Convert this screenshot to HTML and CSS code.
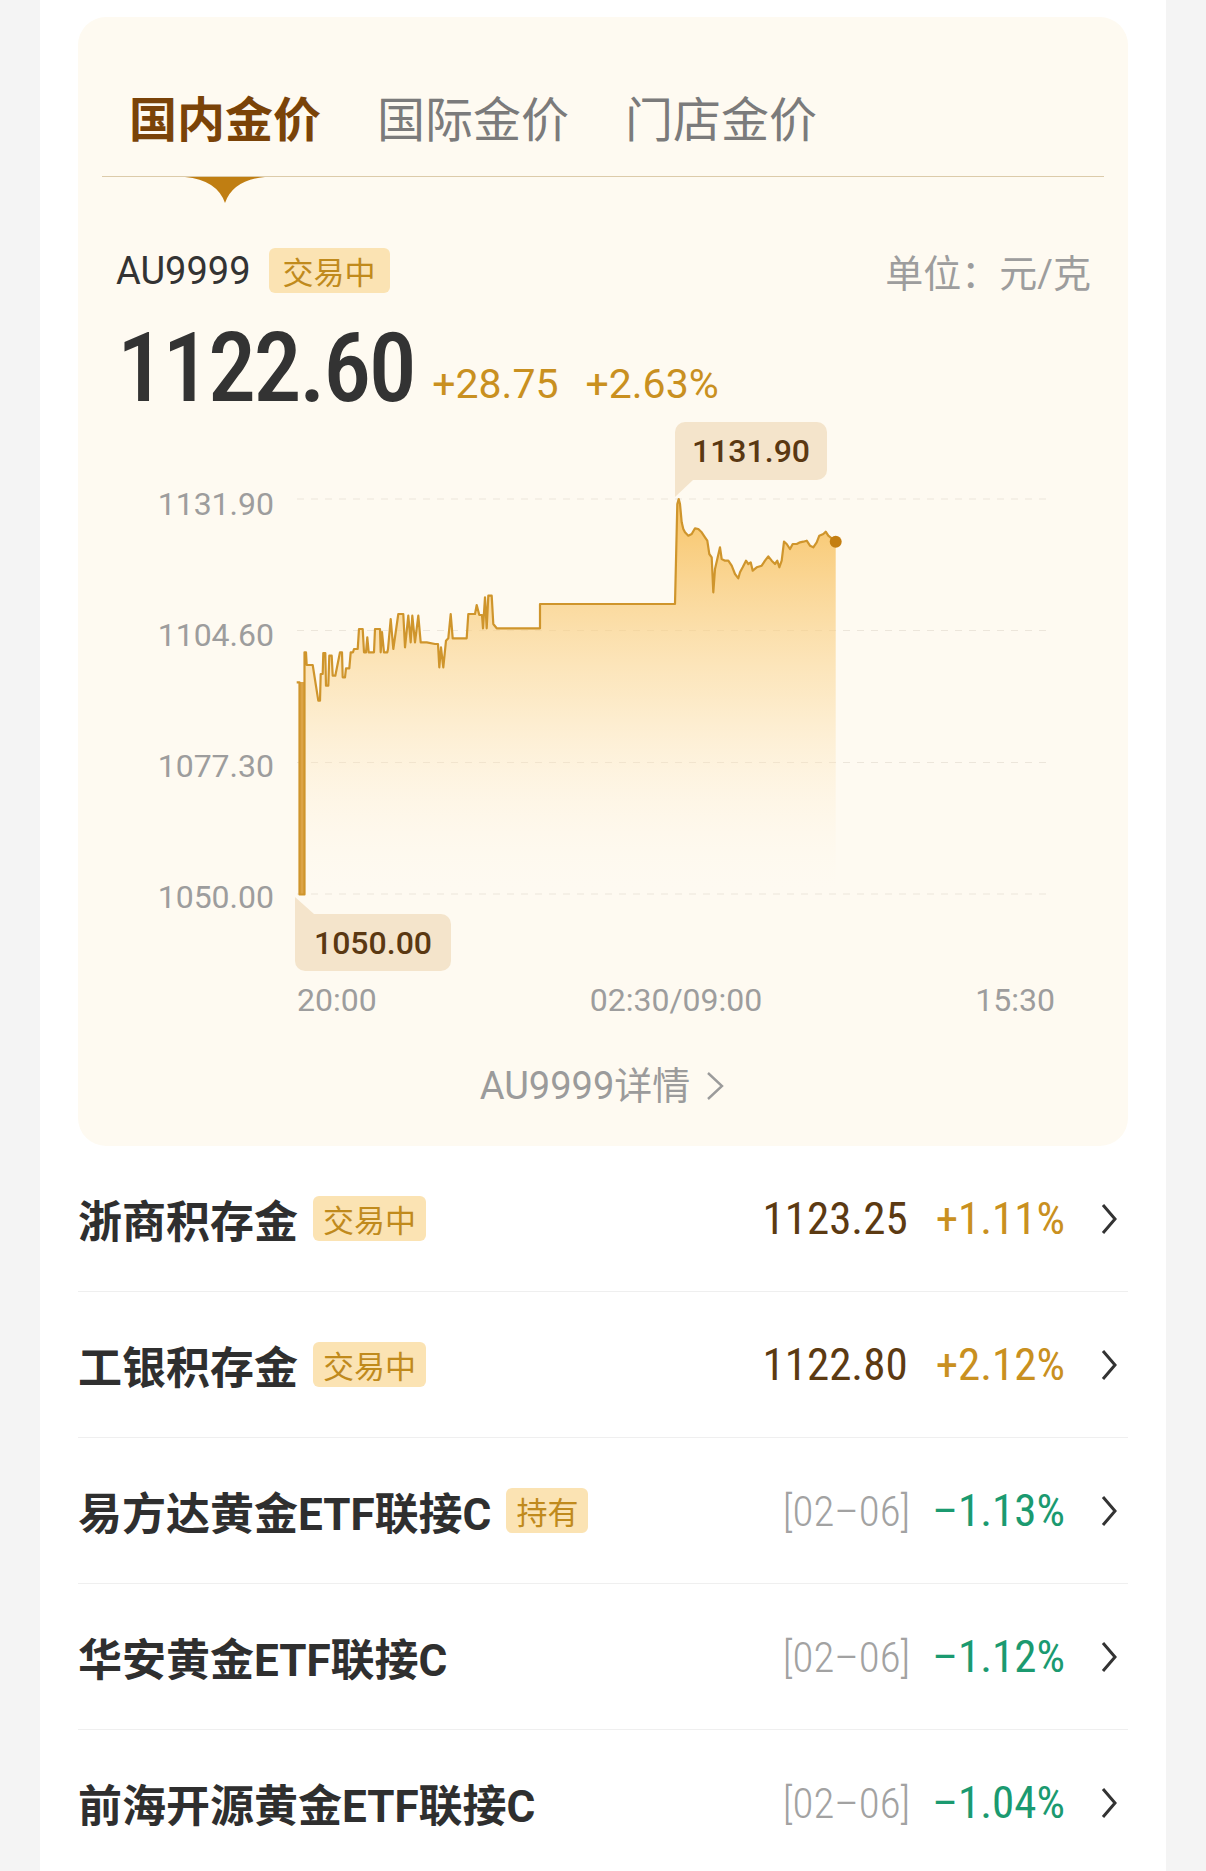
FILE: index.html
```html
<!DOCTYPE html>
<html lang="zh-CN">
<head>
  <meta charset="UTF-8">
  <title>金价</title>
  <link rel="stylesheet" href="styles.css">
</head>
<body>
  <div class="page">
    <div class="card">
      <div class="tabs">
        <span class="tab active">国内金价</span>
        <span class="tab">国际金价</span>
        <span class="tab">门店金价</span>
      </div>
      <div class="tab-line"></div>
      <svg class="tab-arrow" width="80" height="26" viewBox="0 0 80 26"><path d="M0 0H80Q48 3 40 26Q32 3 0 0Z" fill="#c07e12"/></svg>

      <div class="quote-head">
        <div class="quote-name">AU9999<span class="tag">交易中</span></div>
        <div class="unit">单位：元/克</div>
      </div>
      <div class="quote-price"><span class="price-big">1122.60</span><span class="price-chg">+28.75</span><span class="price-chg">+2.63%</span></div>

      <div class="chart">
        <div class="y-axis">
          <span>1131.90</span>
          <span>1104.60</span>
          <span>1077.30</span>
          <span>1050.00</span>
        </div>
        <div class="plot">
          <svg width="753" height="555" viewBox="0 0 753 555">
            <defs>
              <linearGradient id="fillGrad" gradientUnits="userSpaceOnUse" x1="0" y1="500" x2="0" y2="890">
                <stop offset="0" stop-color="#f7bd55" stop-opacity="0.9"/>
                <stop offset="0.5" stop-color="#fbd898" stop-opacity="0.5"/>
                <stop offset="1" stop-color="#fff5e4" stop-opacity="0"/>
              </linearGradient>
            </defs>
            <g transform="translate(-297 -420)">
              <g class="grid">
                <line x1="297" x2="1050" y1="500" y2="500"/>
                <line x1="297" x2="1050" y1="631.5" y2="631.5"/>
                <line x1="297" x2="1050" y1="763.5" y2="763.5"/>
                <line x1="297" x2="1050" y1="895" y2="895"/>
              </g>
              <path fill="url(#fillGrad)" d="M304.5 895V653.3H306L306.7 666H312.7L318.3 701.7H320L320.7 675H322.7L323.3 654H325.3L326 686.7H328.3L329.3 656.7H331.7L332.7 676.7H335.3L340 653.3H342L342.7 678.3H345L346 669.3H349.3L350.7 653.3H353L354 650H357.7L359 630H362.7L364 653.3H366L367.3 638.3L368.7 653.3H374L375 630H380L380.7 653.3L382 633L384 653.3H387.3L388 650L390.7 620L393.3 650L398.3 615H403.3L405 648.3L408.3 616.7L410.7 643.3L412.3 616.7L415 643.3L418.3 616.7L420.7 643.3H426.7L435 645H438L439.3 668.3L441 648.3L443.3 668.3L446 641.7L448.3 639.3L450.7 615L452.7 639.3H466.7L468.3 615H475L476.7 606L479.3 616H482L483 629.3L485 598.3L486.7 629.3L488.3 596.7H491.7L493.3 625L496.7 629.3H540V605H675L677.3 505L678.7 500L680 505L681.7 523.3L683.3 530L685 533.3L688.3 536.7L691.7 535L695 529.3L698.3 530L701.7 533.3L705 538.3L707.3 541.7L709.3 555L711.7 558.3L713.3 593.3L715 570L717.3 560L720 548.3L721.7 560L725 561.7L728.3 561.7L731.7 566.7L735 575L738.3 579.3L740 573.3L742.7 568.3L746 561.7L748.3 565L750.7 563.3L752.7 571.7L756.7 568.3L761.7 566.7L765 561.7L768.3 557.3L771.7 561.7L775 565L777.3 561.7L779.3 568.3L781.7 561.7L784 542.7L786.7 545L790 550L792.7 545L796.7 545L800 543.3L803.3 542.7L806.7 541.7L810 546.7L813.3 548.3L816.7 543.3L819.3 536.7L823.3 535L825.7 532.7L828.3 536.7L831.7 539.3L835.7 542.7V895Z"/>
              <rect x="299" y="683" width="6" height="212" fill="#dca446"/>
              <path class="line" d="M296.7 683.3H299.5V895.5H304.5V653.3H306L306.7 666H312.7L318.3 701.7H320L320.7 675H322.7L323.3 654H325.3L326 686.7H328.3L329.3 656.7H331.7L332.7 676.7H335.3L340 653.3H342L342.7 678.3H345L346 669.3H349.3L350.7 653.3H353L354 650H357.7L359 630H362.7L364 653.3H366L367.3 638.3L368.7 653.3H374L375 630H380L380.7 653.3L382 633L384 653.3H387.3L388 650L390.7 620L393.3 650L398.3 615H403.3L405 648.3L408.3 616.7L410.7 643.3L412.3 616.7L415 643.3L418.3 616.7L420.7 643.3H426.7L435 645H438L439.3 668.3L441 648.3L443.3 668.3L446 641.7L448.3 639.3L450.7 615L452.7 639.3H466.7L468.3 615H475L476.7 606L479.3 616H482L483 629.3L485 598.3L486.7 629.3L488.3 596.7H491.7L493.3 625L496.7 629.3H540V605H675L677.3 505L678.7 500L680 505L681.7 523.3L683.3 530L685 533.3L688.3 536.7L691.7 535L695 529.3L698.3 530L701.7 533.3L705 538.3L707.3 541.7L709.3 555L711.7 558.3L713.3 593.3L715 570L717.3 560L720 548.3L721.7 560L725 561.7L728.3 561.7L731.7 566.7L735 575L738.3 579.3L740 573.3L742.7 568.3L746 561.7L748.3 565L750.7 563.3L752.7 571.7L756.7 568.3L761.7 566.7L765 561.7L768.3 557.3L771.7 561.7L775 565L777.3 561.7L779.3 568.3L781.7 561.7L784 542.7L786.7 545L790 550L792.7 545L796.7 545L800 543.3L803.3 542.7L806.7 541.7L810 546.7L813.3 548.3L816.7 543.3L819.3 536.7L823.3 535L825.7 532.7L828.3 536.7L831.7 539.3L835.7 542.7"/>
              <circle cx="835.7" cy="542.7" r="6" fill="#c47f12"/>
            </g>
          </svg>
          <div class="tip tip-high">1131.90</div>
          <div class="tip tip-low">1050.00</div>
        </div>
      </div>
      <div class="x-axis">
        <span>20:00</span>
        <span>02:30/09:00</span>
        <span>15:30</span>
      </div>

      <a class="detail" href="#">AU9999详情<svg width="22" height="30" viewBox="0 0 22 30"><path d="M4 2L18 15L4 28" fill="none" stroke="#9b9b9b" stroke-width="2.4"/></svg></a>
    </div>

    <ul class="list">
      <li class="row">
        <div class="row-name">浙商积存金<span class="tag">交易中</span></div>
        <div class="row-data"><span class="val">1123.25</span><span class="up">+1.11%</span><svg class="go" width="18" height="32" viewBox="0 0 18 32"><path d="M3 2L15 16L3 30" fill="none" stroke="#333" stroke-width="3"/></svg></div>
      </li>
      <li class="row">
        <div class="row-name">工银积存金<span class="tag">交易中</span></div>
        <div class="row-data"><span class="val">1122.80</span><span class="up">+2.12%</span><svg class="go" width="18" height="32" viewBox="0 0 18 32"><path d="M3 2L15 16L3 30" fill="none" stroke="#333" stroke-width="3"/></svg></div>
      </li>
      <li class="row">
        <div class="row-name">易方达黄金ETF联接C<span class="tag">持有</span></div>
        <div class="row-data"><span class="date">[02–06]</span><span class="down">–1.13%</span><svg class="go" width="18" height="32" viewBox="0 0 18 32"><path d="M3 2L15 16L3 30" fill="none" stroke="#333" stroke-width="3"/></svg></div>
      </li>
      <li class="row">
        <div class="row-name">华安黄金ETF联接C</div>
        <div class="row-data"><span class="date">[02–06]</span><span class="down">–1.12%</span><svg class="go" width="18" height="32" viewBox="0 0 18 32"><path d="M3 2L15 16L3 30" fill="none" stroke="#333" stroke-width="3"/></svg></div>
      </li>
      <li class="row">
        <div class="row-name">前海开源黄金ETF联接C</div>
        <div class="row-data"><span class="date">[02–06]</span><span class="down">–1.04%</span><svg class="go" width="18" height="32" viewBox="0 0 18 32"><path d="M3 2L15 16L3 30" fill="none" stroke="#333" stroke-width="3"/></svg></div>
      </li>
    </ul>
  </div>
</body>
</html>
```

FILE: styles.css
```css
body {
  margin: 0;
  background: #f4f4f4;
  font-family: Roboto, "Noto Sans CJK SC", sans-serif;
}
.page {
  width: 1126px;
  min-height: 1871px;
  margin: 0 auto;
  padding: 17px 38px 0;
  box-sizing: border-box;
  background: #fff;
}

/* top card */
.card {
  background: #fefaf1;
  border-radius: 28px;
  padding: 75px 24px 38px;
}
.tabs {
  display: flex;
  gap: 56px;
  padding-left: 27px;
}
.tab {
  font-family: "Noto Sans CJK SC", sans-serif;
  font-size: 48px;
  line-height: 48px;
  color: #7b7b7b;
}
.tab.active {
  color: #7a4308;
  font-weight: 700;
}
.tab-line {
  height: 1px;
  margin-top: 36px;
  background: #dccbaa;
}
.tab-arrow {
  display: block;
  margin-left: 83px;
}
.quote-head {
  display: flex;
  justify-content: space-between;
  align-items: center;
  height: 45px;
  margin-top: 45px;
  padding: 0 13px 0 14px;
}
.quote-name {
  display: flex;
  align-items: center;
  gap: 18px;
  font-size: 38px;
  color: #333;
}
.tag {
  display: inline-flex;
  align-items: center;
  height: 45px;
  padding: 0 14px;
  border-radius: 6px;
  background: #fbe3b3;
  color: #c08a1c;
  font-family: "Noto Sans CJK SC", sans-serif;
  font-size: 31px;
  font-weight: 400;
}
.unit {
  font-size: 38px;
  color: #9d9d9d;
}
.quote-price {
  height: 98px;
  margin-top: 26px;
  padding-left: 15px;
  line-height: 98px;
  white-space: nowrap;
}
.price-big {
  font-family: "Roboto Condensed", Roboto, sans-serif;
  font-size: 96px;
  font-weight: 500;
  letter-spacing: -2.5px;
  color: #333;
}
.price-chg {
  margin-left: 18px;
  font-size: 41px;
  line-height: 1;
  vertical-align: 3px;
  color: #c99020;
}
.price-chg + .price-chg {
  margin-left: 27px;
}

/* chart */
.chart {
  display: flex;
  height: 555px;
  margin-top: 2px;
}
.y-axis {
  flex: none;
  width: 172px;
  display: flex;
  flex-direction: column;
  align-items: flex-end;
  gap: 91px;
  padding-top: 65px;
  box-sizing: border-box;
  font-size: 32px;
  line-height: 40px;
  color: #9d9d9d;
}
.plot {
  position: relative;
  width: 753px;
  margin-left: 23px;
}
.plot svg {
  display: block;
  overflow: visible;
}
.grid line {
  stroke: #ece6db;
  stroke-width: 1;
  stroke-dasharray: 7 7;
}
.line {
  fill: none;
  stroke: #cf952c;
  stroke-width: 2.2;
  stroke-linejoin: round;
}
.tip {
  position: absolute;
  display: flex;
  justify-content: center;
  align-items: center;
  background: #f4e4cb;
  border-radius: 10px;
  font-size: 32px;
  font-weight: 500;
  color: #5a3812;
}
.tip-high {
  left: 378px;
  top: 3px;
  width: 152px;
  height: 58px;
  border-bottom-left-radius: 0;
}
.tip-high::after {
  content: "";
  position: absolute;
  left: 0;
  top: 100%;
  border-top: 17px solid #f4e4cb;
  border-right: 18px solid transparent;
}
.tip-low {
  left: -2px;
  top: 495px;
  width: 156px;
  height: 57px;
  border-top-left-radius: 0;
}
.tip-low::before {
  content: "";
  position: absolute;
  left: 0;
  bottom: 100%;
  border-bottom: 17px solid #f4e4cb;
  border-right: 19px solid transparent;
}
.x-axis {
  display: flex;
  justify-content: space-between;
  width: 758px;
  margin: 10px 0 0 195px;
  font-size: 32px;
  line-height: 32px;
  color: #9d9d9d;
}
.detail {
  display: flex;
  justify-content: center;
  align-items: center;
  gap: 14px;
  margin-top: 51px;
  margin-bottom: 3px;
  font-size: 38px;
  line-height: 38px;
  color: #9b9b9b;
  text-decoration: none;
}

/* list */
.list {
  list-style: none;
  margin: 0;
  padding: 0;
}
.row {
  display: flex;
  justify-content: space-between;
  align-items: center;
  height: 145px;
  padding-right: 10px;
  border-bottom: 1px solid #efefef;
}
.row-name {
  display: flex;
  align-items: center;
  font-size: 44px;
  font-weight: 700;
  color: #2f2f2f;
}
.row-name .tag {
  margin-left: 15px;
  padding: 0 10px;
}
.row-data {
  display: flex;
  align-items: center;
  font-family: "Roboto Condensed", Roboto, sans-serif;
  font-size: 45px;
}
.val {
  margin-right: 28px;
  color: #5c3a12;
}
.up {
  color: #c99020;
}
.date {
  margin-right: 22px;
  font-size: 43px;
  font-weight: 300;
  color: #a2a2a2;
}
.down {
  color: #1b9a70;
}
.go {
  margin-left: 35px;
}
```
